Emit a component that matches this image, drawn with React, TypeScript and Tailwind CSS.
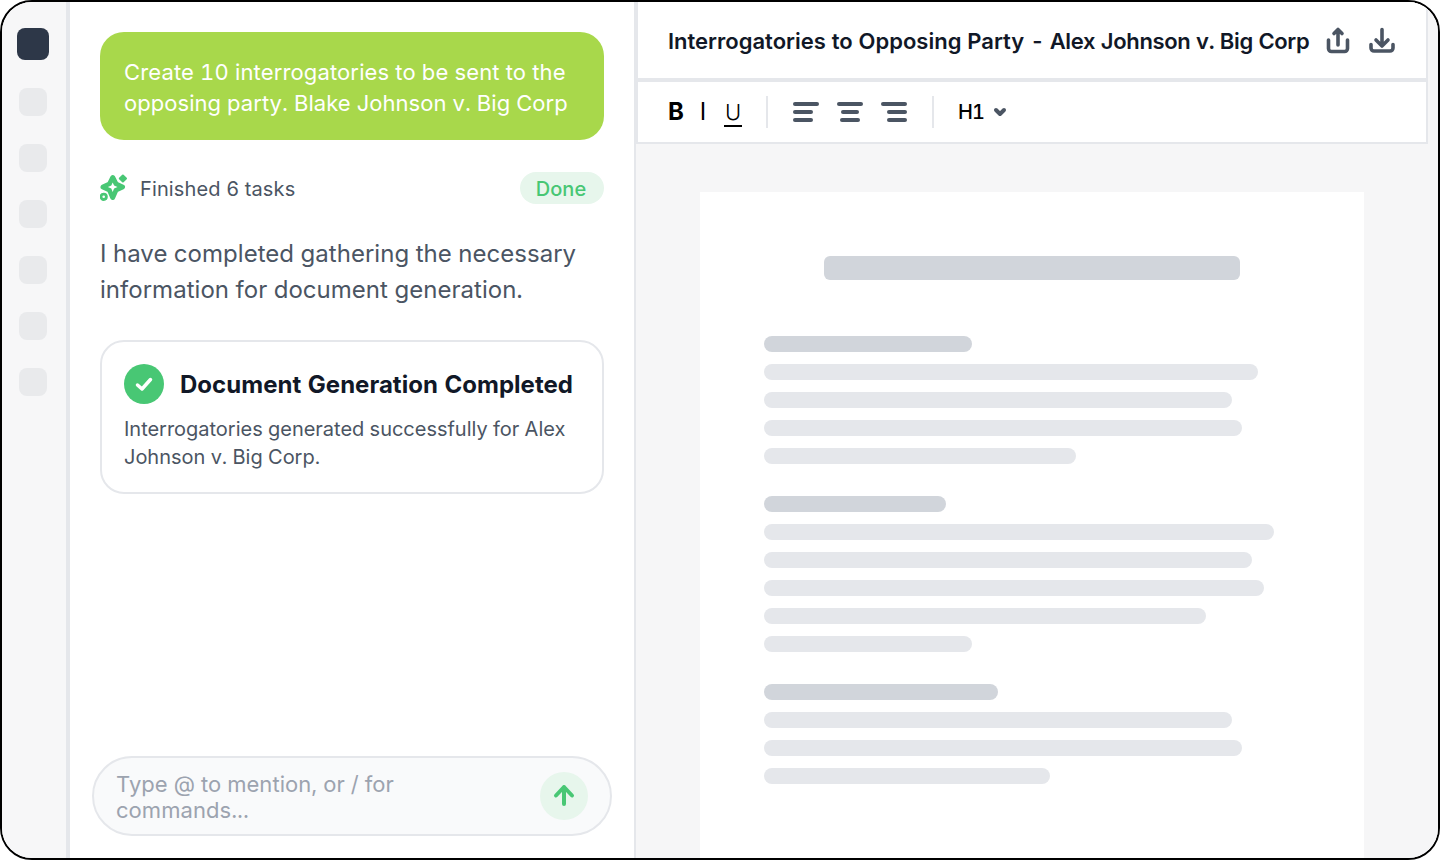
function Line({ w, dark }: { w: string; dark?: boolean }) {
  return <div className={`h-4 rounded-full ${w} ${dark ? "bg-[#d1d5db]" : "bg-[#e5e7eb]"}`} />;
}

function Pulse() {
  return <div className="h-7 w-7 rounded-lg bg-[#e9eaec]" />;
}

function AlignIcon({ rows }: { rows: number[][] }) {
  return (
    <svg width="26" height="20" viewBox="0 0 26 20" fill="none" stroke="#4b5563" strokeWidth="4" strokeLinecap="round">
      {rows.map((r, i) => (
        <path key={i} d={`M${r[0]} ${2 + i * 8}H${r[1]}`} />
      ))}
    </svg>
  );
}

export default function App() {
  return (
    <div className="h-[860px] w-[1440px] bg-white tabular-nums" style={{ fontFamily: "Inter, 'Liberation Sans', sans-serif" }}>
      <div className="flex h-full w-full overflow-hidden rounded-[32px] border-2 border-black bg-white">
        <aside className="flex w-[68px] shrink-0 flex-col items-center border-r-4 border-[#e5e7eb] bg-[#f7f7f8] pr-1 pt-[26px]">
          <div className="mb-[28px] ml-0.5 h-8 w-8 rounded-lg bg-[#2d3748]" />
          <div className="ml-0.5 flex flex-col gap-[28px]">
            <Pulse />
            <Pulse />
            <Pulse />
            <Pulse />
            <Pulse />
            <Pulse />
          </div>
        </aside>

        <section className="relative flex w-[566px] shrink-0 flex-col border-r-2 border-[#e5e7eb] bg-white pl-[30px] pr-[30px] pt-[30px]">
          <div className="h-[108px] w-[504px] rounded-3xl bg-[#a8d84b] px-6 pt-[25px] text-[22px] leading-[31px] text-white">
            <span className="tracking-[0.14px]">Create 10 interrogatories to be sent to the</span> <span className="tracking-[0.05px]">opposing party. Blake Johnson v. Big Corp</span>
          </div>

          <div className="mt-8 flex h-8 w-[504px] items-center justify-between">
            <div className="flex items-center gap-3">
              <svg width="28" height="28" viewBox="0 0 28 28" fill="none">
                <path d="M12.700 3.500 16 10l6.500 3-6.500 3-3.300 7.500L9.500 16 3 13l6.500-3Z" fill="#48c774" stroke="#48c774" strokeWidth="5" strokeLinejoin="round" />
                <path d="M12.700 8.500l1.400 3.100 3.400 1.400-3.400 1.400-1.400 3.600-1.400-3.600L7.900 13l3.400-1.400Z" fill="#fff" />
                <path d="M22.900 1.500 26 4.500 22.900 7.500 19.800 4.500Z" fill="#48c774" stroke="#48c774" strokeWidth="2" strokeLinejoin="round" />
                <circle cx="3.700" cy="22.800" r="2.700" fill="#fff" stroke="#48c774" strokeWidth="2.800" />
              </svg>
              <span className="relative top-px text-xl tracking-[0.13px] text-[#4b5563]">Finished 6 tasks</span>
            </div>
            <span className="relative flex h-8 w-[84px] items-center justify-center rounded-full bg-[#e7f6ec] pt-0.5 pr-0.5 text-xl font-medium text-[#48c774]">Done</span>
          </div>

          <p className="mt-8 w-[504px] text-2xl leading-9 tracking-[0.03px] text-[#4b5563]">I have completed gathering the necessary information for document generation.</p>

          <div className="mt-[32px] h-[154px] w-[504px] rounded-3xl border-2 border-[#e5e7eb] bg-white px-[22px] pt-[22px]">
            <div className="flex items-center gap-4">
              <span className="flex h-10 w-10 items-center justify-center rounded-full bg-[#48c774]">
                <svg width="20" height="20" viewBox="0 0 20 20" fill="none" stroke="#fff" strokeWidth="3.500" strokeLinecap="round" strokeLinejoin="round">
                  <path d="M3.500 11 8 15l8.500-9.500" />
                </svg>
              </span>
              <span className="relative top-px text-2xl font-bold tracking-[0.03px] text-[#111827]">Document Generation Completed</span>
            </div>
            <p className="mt-[11px] text-xl leading-7 tracking-[-0.02px] text-[#4b5563]">Interrogatories generated successfully for Alex Johnson v. Big Corp.</p>
          </div>

          <div className="absolute bottom-[22px] left-[22px] flex h-20 w-[520px] items-center rounded-full border-2 border-[#e5e7eb] bg-[#f9fafb] pl-[22px] pr-[22px]">
            <div className="relative top-px w-[400px] text-[22px] leading-[26px] tracking-[0.05px] text-[#9ca3af]">Type @ to mention, or / for commands...</div>
            <span className="ml-auto flex h-12 w-12 items-center justify-center rounded-full bg-[#e7f6ec]">
              <svg width="24" height="24" viewBox="0 0 24 24" fill="none" stroke="#48c774" strokeWidth="4" strokeLinecap="round" strokeLinejoin="round">
                <path d="M12 20V3M4 11.500 12 3l8 8.500" />
              </svg>
            </span>
          </div>
        </section>

        <main className="flex min-w-0 flex-1 flex-col bg-[#f6f6f7]">
          <div className="mr-2.5 flex h-[80px] shrink-0 items-center justify-between border-b-4 border-l-2 border-r-2 border-[#e5e7eb] bg-white pl-[30px] pr-[30px]">
            <h1 className="relative top-px whitespace-nowrap text-[22px] font-semibold text-[#111827]">
              Interrogatories to Opposing Party <span className="tracking-[-0.33px]">- Alex Johnson v. Big Corp</span>
            </h1>
            <div className="flex items-center gap-4">
              <svg width="28" height="28" viewBox="0 0 28 28" fill="none" stroke="#4b5563" strokeWidth="3.600" strokeLinecap="round" strokeLinejoin="round">
                <path d="M4.500 14v8.500a3 3 0 0 0 3 3h13a3 3 0 0 0 3-3V14" />
                <path d="M14 19V3.500M10 7.500l4-4 4 4" />
              </svg>
              <svg width="28" height="28" viewBox="0 0 28 28" fill="none" stroke="#4b5563" strokeWidth="3.600" strokeLinecap="round" strokeLinejoin="round">
                <path d="M3 18.500V22a3 3 0 0 0 3 3h16a3 3 0 0 0 3-3v-3.500" />
                <path d="M14 3.500V20M8 14l6 6 6-6" />
              </svg>
            </div>
          </div>

          <div className="mr-2.5 flex h-[62px] shrink-0 items-center border-b-2 border-l-2 border-r-2 border-[#e5e7eb] bg-white pl-[30px]">
            <span className="w-4 text-2xl font-bold leading-none text-black">B</span>
            <span className="ml-[14px] w-[10px] text-center text-2xl leading-none text-black">I</span>
            <span className="ml-4 mt-0.5 w-[18px] border-b-2 border-black text-center text-[22px] font-light leading-[26px] text-black">U</span>
            <span className="ml-6 h-8 w-0.5 bg-[#e5e7eb]" />
            <span className="ml-[25px]"><AlignIcon rows={[[2, 24], [2, 18], [2, 18]]} /></span>
            <span className="ml-[18px]"><AlignIcon rows={[[2, 24], [6, 20], [5, 21]]} /></span>
            <span className="ml-[18px]"><AlignIcon rows={[[2, 24], [8, 24], [8, 24]]} /></span>
            <span className="ml-[25px] h-8 w-0.5 bg-[#e5e7eb]" />
            <span className="ml-6 text-xl font-medium tracking-[-1px] text-black">H1</span>
            <svg className="ml-[9px]" width="14" height="14" viewBox="0 0 14 14" fill="none" stroke="#4b5563" strokeWidth="4" strokeLinecap="round" strokeLinejoin="round">
              <path d="M3 5 7 9l4-4" />
            </svg>
          </div>

          <div className="flex-1 pl-16 pt-12">
            <div className="h-full w-[664px] bg-white px-16 pt-16">
              <div className="mx-auto h-6 w-[416px] rounded-md bg-[#d1d5db]" />
              <div className="mt-14 flex flex-col gap-3">
                <Line w="w-[208px]" dark />
                <Line w="w-[494px]" />
                <Line w="w-[468px]" />
                <Line w="w-[478px]" />
                <Line w="w-[312px]" />
              </div>
              <div className="mt-8 flex flex-col gap-3">
                <Line w="w-[182px]" dark />
                <Line w="w-[510px]" />
                <Line w="w-[488px]" />
                <Line w="w-[500px]" />
                <Line w="w-[442px]" />
                <Line w="w-[208px]" />
              </div>
              <div className="mt-8 flex flex-col gap-3">
                <Line w="w-[234px]" dark />
                <Line w="w-[468px]" />
                <Line w="w-[478px]" />
                <Line w="w-[286px]" />
              </div>
            </div>
          </div>
        </main>
      </div>
    </div>
  );
}
